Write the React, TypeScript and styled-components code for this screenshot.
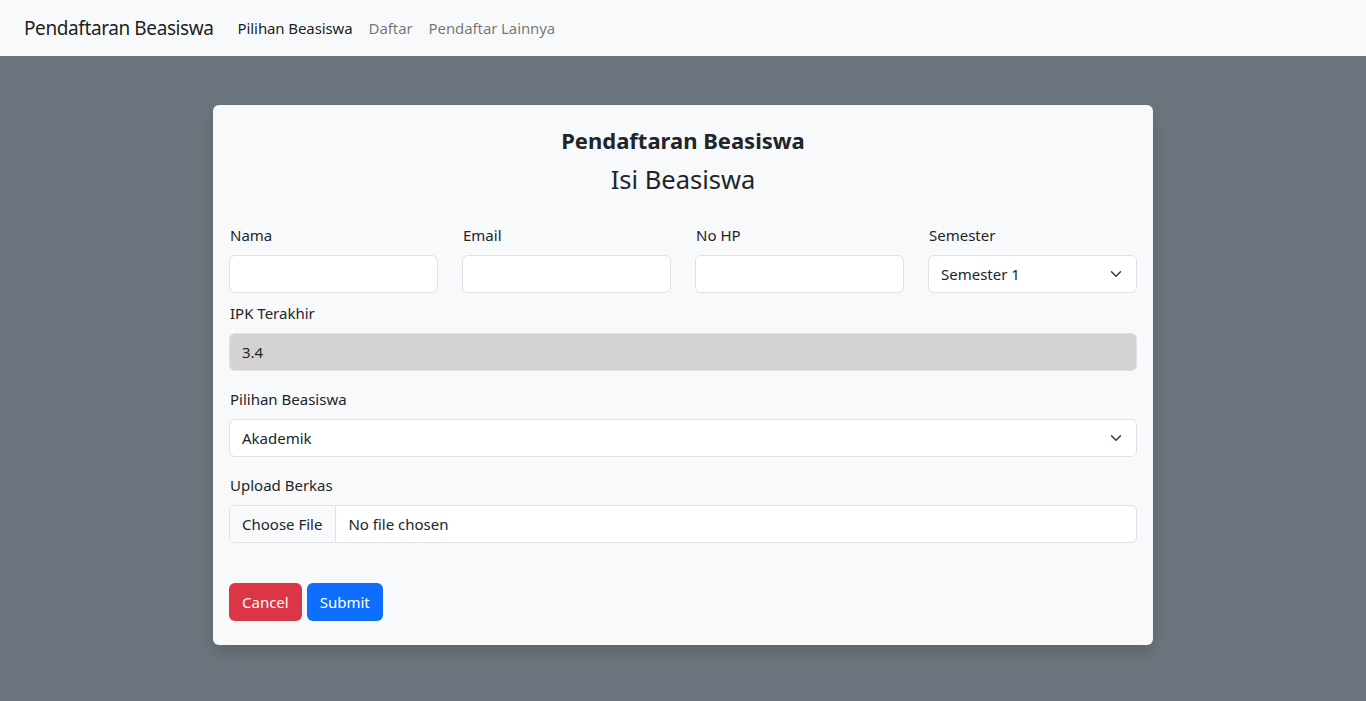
import { FC } from "react";
import styled, { createGlobalStyle } from "styled-components";

const GlobalStyle = createGlobalStyle`
  html, body {
    margin: 0;
    padding: 0;
  }
  body {
    font-family: "Noto Sans", "Open Sans", sans-serif;
    font-size: 16px;
    line-height: 1.5;
    color: #212529;
    background: #6c757d;
    min-height: 701px;
  }
  * {
    box-sizing: border-box;
  }
`;

const NAV_LINKS = [
  { label: "Pilihan Beasiswa", active: true },
  { label: "Daftar", active: false },
  { label: "Pendaftar Lainnya", active: false },
];

const App: FC = () => {
  return (
    <>
      <GlobalStyle />
      <Navbar>
        <Brand>Pendaftaran Beasiswa</Brand>
        <NavList>
          {NAV_LINKS.map((link) => (
            <NavLink key={link.label} $active={link.active}>
              {link.label}
            </NavLink>
          ))}
        </NavList>
      </Navbar>

      <Main>
        <Card>
          <Header>
            <Title>Pendaftaran Beasiswa</Title>
            <Subtitle>Isi Beasiswa</Subtitle>
          </Header>

          <Row>
            <Field>
              <Label>Nama</Label>
              <Input type="text" />
            </Field>
            <Field>
              <Label>Email</Label>
              <Input type="email" />
            </Field>
            <Field>
              <Label>No HP</Label>
              <Input type="text" />
            </Field>
            <Field>
              <Label>Semester</Label>
              <SelectBox>
                <span>Semester 1</span>
                <Chevron />
              </SelectBox>
            </Field>
          </Row>

          <Group $mb={16}>
            <Label>IPK Terakhir</Label>
            <Input type="text" value="3.4" disabled readOnly />
          </Group>

          <Group $mb={16}>
            <Label>Pilihan Beasiswa</Label>
            <SelectBox>
              <span>Akademik</span>
              <Chevron />
            </SelectBox>
          </Group>

          <Group $mb={40}>
            <Label>Upload Berkas</Label>
            <FileInput>
              <FileButton>Choose File</FileButton>
              <FileName>No file chosen</FileName>
            </FileInput>
          </Group>

          <Actions>
            <Button $variant="danger">Cancel</Button>
            <Button $variant="primary">Submit</Button>
          </Actions>
        </Card>
      </Main>
    </>
  );
};

const Chevron: FC = () => (
  <svg width="16" height="12" viewBox="0 0 16 16" fill="none">
    <path
      d="m2 5 6 6 6-6"
      stroke="#343a40"
      strokeWidth="2"
      strokeLinecap="round"
      strokeLinejoin="round"
    />
  </svg>
);

const Navbar = styled.nav`
  height: 56px;
  background: #f8f9fa;
  display: flex;
  align-items: center;
  padding: 0 24px;
`;

const Brand = styled.a`
  font-size: 19px;
  letter-spacing: -0.4px;
  color: rgba(0, 0, 0, 0.9);
  margin-right: 16px;
  white-space: nowrap;
`;

const NavList = styled.div`
  display: flex;
  align-items: center;
`;

const NavLink = styled.a<{ $active: boolean }>`
  padding: 8px;
  font-size: 15px;
  letter-spacing: -0.1px;
  color: ${({ $active }) => ($active ? "rgba(0,0,0,0.9)" : "rgba(0,0,0,0.55)")};
  white-space: nowrap;
`;

const Main = styled.main`
  display: flex;
  justify-content: center;
  padding-top: 49px;
`;

const Card = styled.div`
  width: 940px;
  background: #f8f9fa;
  border-radius: 6px;
  box-shadow: 0 0.5rem 1rem rgba(0, 0, 0, 0.15);
  padding: 16px 16px 24px;
`;

const Header = styled.div`
  text-align: center;
  padding-top: 5px;
  margin-bottom: 27px;
`;

const Title = styled.h4`
  margin: 0 0 8px;
  font-size: 22px;
  font-weight: 700;
  line-height: 28px;
`;

const Subtitle = styled.h3`
  margin: 0;
  font-size: 25.5px;
  font-weight: 400;
  line-height: 34px;
`;

const Row = styled.div`
  display: grid;
  grid-template-columns: repeat(4, 1fr);
  column-gap: 24px;
  margin-bottom: 8px;
`;

const Field = styled.div`
  display: flex;
  flex-direction: column;
`;

const Group = styled.div<{ $mb: number }>`
  display: flex;
  flex-direction: column;
  margin-bottom: ${({ $mb }) => $mb}px;
`;

const Label = styled.label`
  font-size: 15px;
  line-height: 24px;
  margin-bottom: 8px;
  padding-left: 1px;
`;

const Input = styled.input`
  height: 38px;
  width: 100%;
  padding: 6px 12px;
  font: inherit;
  font-size: 15px;
  color: #212529;
  background: #fff;
  border: 1px solid #dee2e6;
  border-radius: 6px;
  outline: none;

  &:disabled {
    background: #d3d3d3;
    color: #212529;
    opacity: 1;
  }
`;

const SelectBox = styled.div`
  height: 38px;
  display: flex;
  align-items: center;
  justify-content: space-between;
  padding: 0 12px;
  font-size: 15px;
  background: #fff;
  border: 1px solid #dee2e6;
  border-radius: 6px;
`;

const FileInput = styled.div`
  height: 38px;
  display: flex;
  align-items: stretch;
  font-size: 15px;
  background: #fff;
  border: 1px solid #dee2e6;
  border-radius: 6px;
  overflow: hidden;
`;

const FileButton = styled.span`
  display: flex;
  align-items: center;
  padding: 0 13px 0 12px;
  background: #f8f9fa;
  border-right: 1px solid #dee2e6;
  white-space: nowrap;
`;

const FileName = styled.span`
  display: flex;
  align-items: center;
  padding: 0 12px;
`;

const Actions = styled.div`
  display: flex;
  gap: 5px;
`;

const Button = styled.button<{ $variant: "danger" | "primary" }>`
  height: 38px;
  padding: 0 12px;
  font: inherit;
  font-size: 15px;
  color: #fff;
  border: 1px solid transparent;
  border-radius: 6px;
  background: ${({ $variant }) => ($variant === "danger" ? "#dc3545" : "#0d6efd")};
  cursor: pointer;
`;

export default App;
